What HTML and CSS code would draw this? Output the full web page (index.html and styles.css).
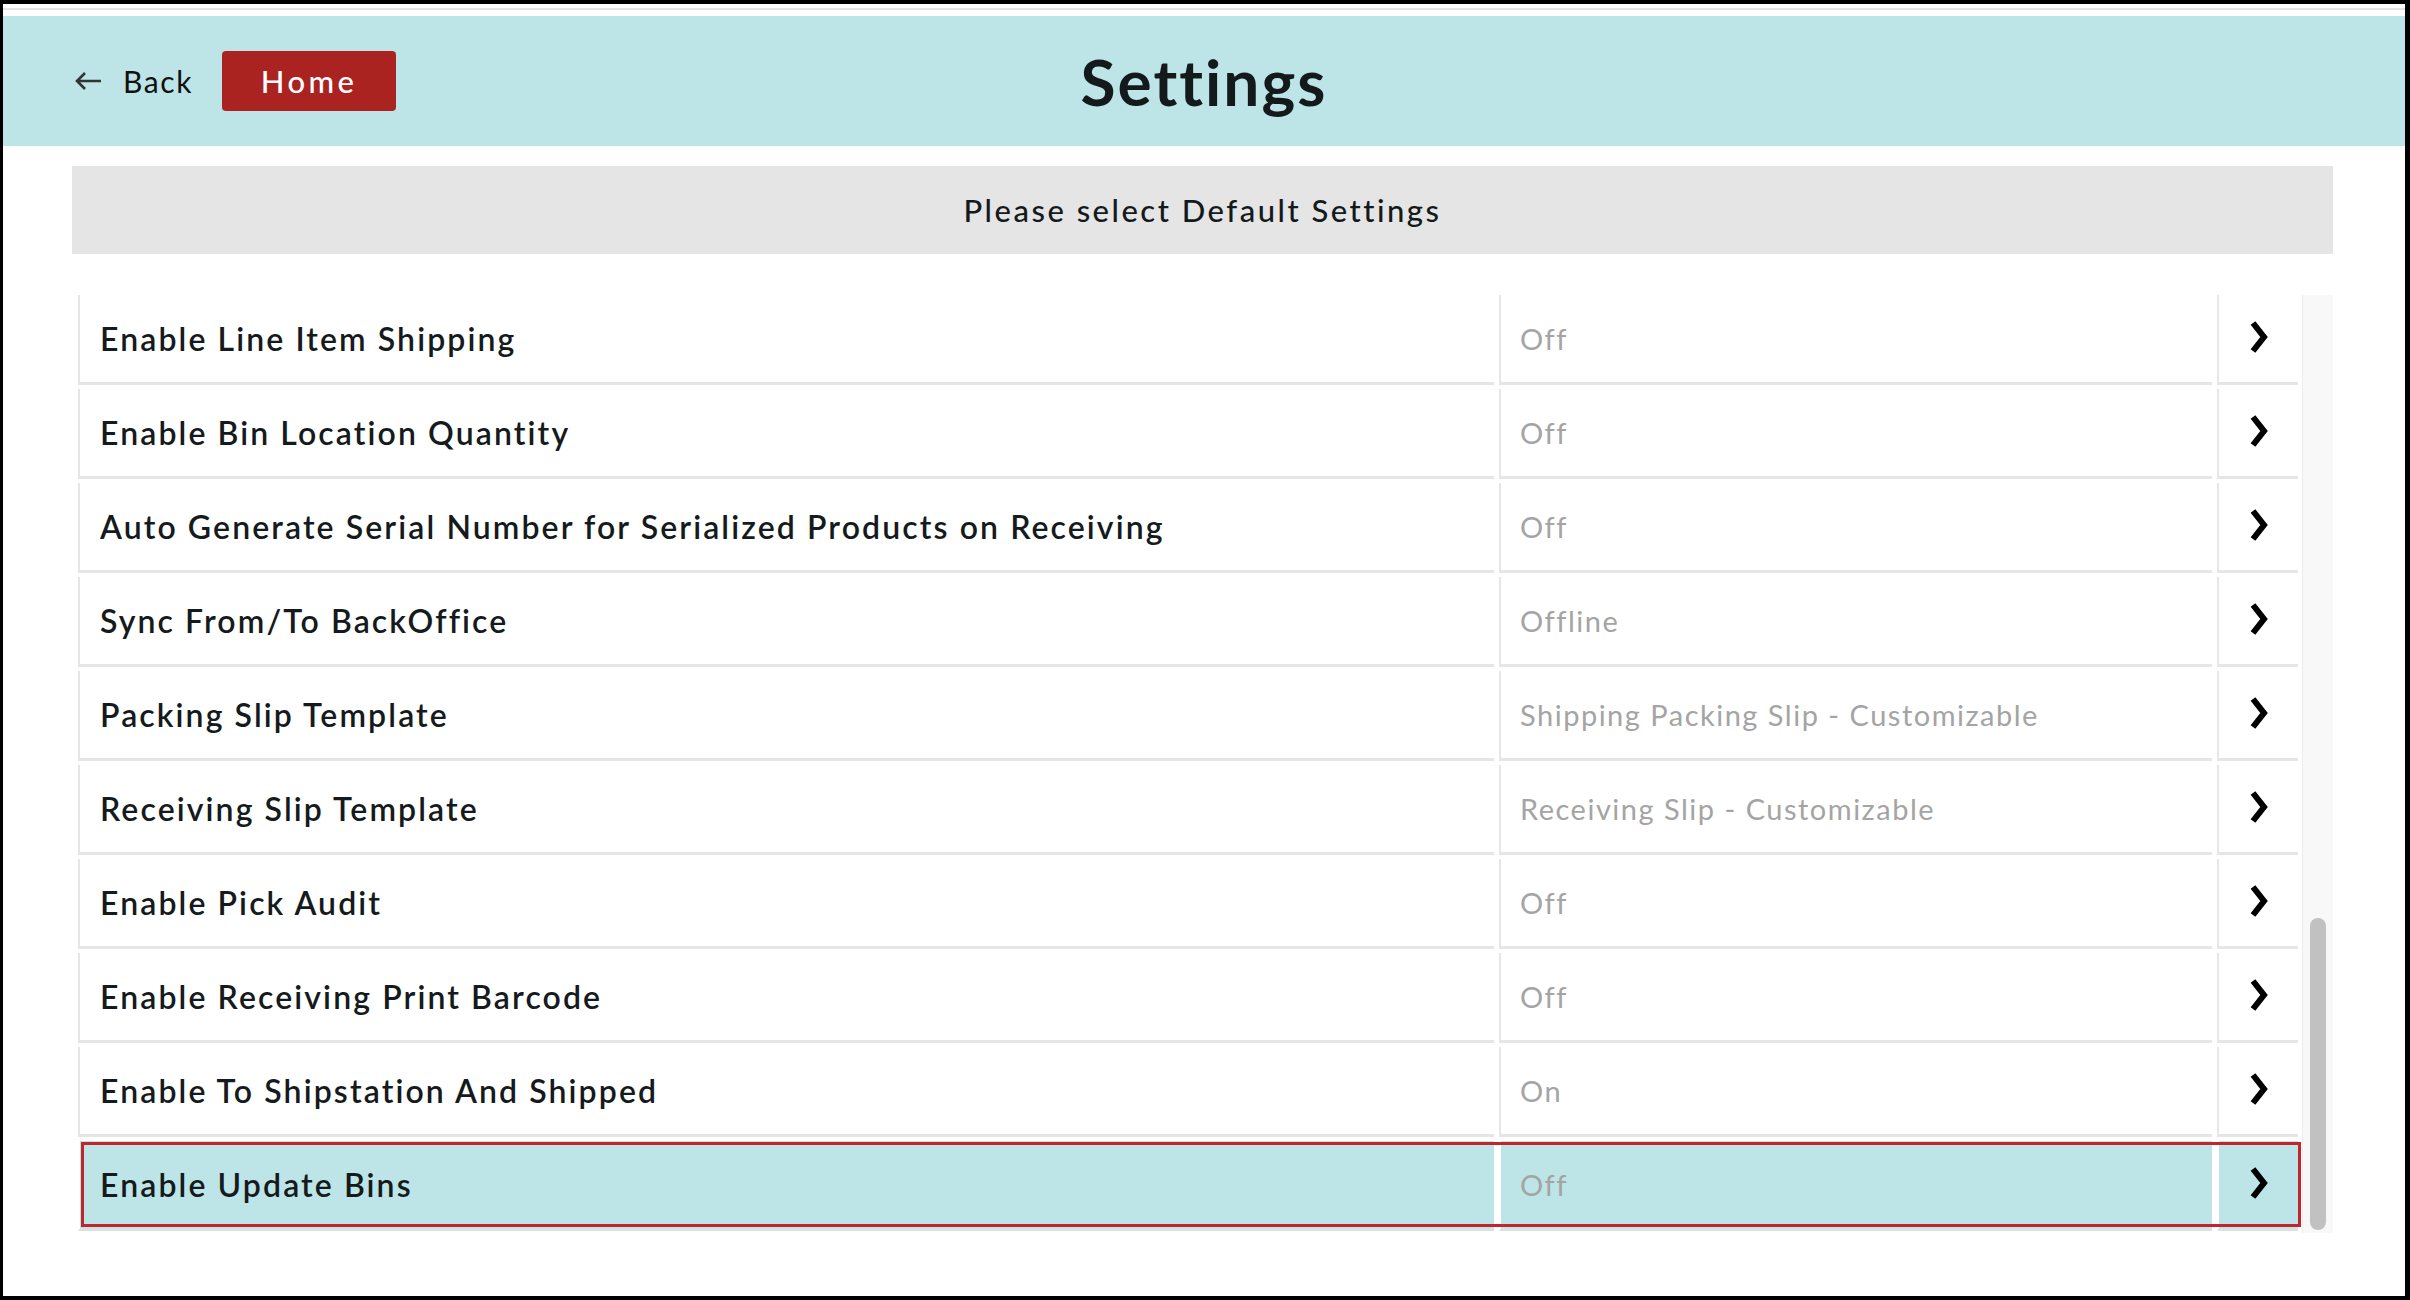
FILE: index.html
```html
<html>
<head>
	<title>Settings</title>
	<meta charset='UTF-8'>
	<link rel="stylesheet" href="styles.css">
</head>
<body>
	<div class='frame'>
		<div class='topline'></div>
		<div class='topbar'>
			<div class='nav'>
				<a class='back' href='#'>
					<svg width='28' height='20' viewBox='0 0 28 20'><path d='M27 10H3M11 2L3 10L11 18' fill='none' stroke='#333' stroke-width='2.6'/></svg>
					<span>Back</span>
				</a>
				<a class='home' href='#'>Home</a>
			</div>
			<h1 class='title'>Settings</h1>
			<div></div>
		</div>
		<div class='content'>
			<div class='notice'>Please select Default Settings</div>
			<div class='listwrap'>
				<div class='list'>
					<div class='row'>
						<div class='cell label'>Enable Line Item Shipping</div>
						<div class='cell value'>Off</div>
						<div class='cell go'><svg class='chev' width='20' height='34' viewBox='0 0 20 34'><polyline points='4,3 15,17 4,31' fill='none' stroke='#000' stroke-width='6'/></svg></div>
					</div>
					<div class='row'>
						<div class='cell label'>Enable Bin Location Quantity</div>
						<div class='cell value'>Off</div>
						<div class='cell go'><svg class='chev' width='20' height='34' viewBox='0 0 20 34'><polyline points='4,3 15,17 4,31' fill='none' stroke='#000' stroke-width='6'/></svg></div>
					</div>
					<div class='row'>
						<div class='cell label'>Auto Generate Serial Number for Serialized Products on Receiving</div>
						<div class='cell value'>Off</div>
						<div class='cell go'><svg class='chev' width='20' height='34' viewBox='0 0 20 34'><polyline points='4,3 15,17 4,31' fill='none' stroke='#000' stroke-width='6'/></svg></div>
					</div>
					<div class='row'>
						<div class='cell label'>Sync From/To BackOffice</div>
						<div class='cell value'>Offline</div>
						<div class='cell go'><svg class='chev' width='20' height='34' viewBox='0 0 20 34'><polyline points='4,3 15,17 4,31' fill='none' stroke='#000' stroke-width='6'/></svg></div>
					</div>
					<div class='row'>
						<div class='cell label'>Packing Slip Template</div>
						<div class='cell value'>Shipping Packing Slip - Customizable</div>
						<div class='cell go'><svg class='chev' width='20' height='34' viewBox='0 0 20 34'><polyline points='4,3 15,17 4,31' fill='none' stroke='#000' stroke-width='6'/></svg></div>
					</div>
					<div class='row'>
						<div class='cell label'>Receiving Slip Template</div>
						<div class='cell value'>Receiving Slip - Customizable</div>
						<div class='cell go'><svg class='chev' width='20' height='34' viewBox='0 0 20 34'><polyline points='4,3 15,17 4,31' fill='none' stroke='#000' stroke-width='6'/></svg></div>
					</div>
					<div class='row'>
						<div class='cell label'>Enable Pick Audit</div>
						<div class='cell value'>Off</div>
						<div class='cell go'><svg class='chev' width='20' height='34' viewBox='0 0 20 34'><polyline points='4,3 15,17 4,31' fill='none' stroke='#000' stroke-width='6'/></svg></div>
					</div>
					<div class='row'>
						<div class='cell label'>Enable Receiving Print Barcode</div>
						<div class='cell value'>Off</div>
						<div class='cell go'><svg class='chev' width='20' height='34' viewBox='0 0 20 34'><polyline points='4,3 15,17 4,31' fill='none' stroke='#000' stroke-width='6'/></svg></div>
					</div>
					<div class='row'>
						<div class='cell label'>Enable To Shipstation And Shipped</div>
						<div class='cell value'>On</div>
						<div class='cell go'><svg class='chev' width='20' height='34' viewBox='0 0 20 34'><polyline points='4,3 15,17 4,31' fill='none' stroke='#000' stroke-width='6'/></svg></div>
					</div>
					<div class='row selected'>
						<div class='cell label'>Enable Update Bins</div>
						<div class='cell value'>Off</div>
						<div class='cell go'><svg class='chev' width='20' height='34' viewBox='0 0 20 34'><polyline points='4,3 15,17 4,31' fill='none' stroke='#000' stroke-width='6'/></svg></div>
					</div>
				</div>
				<div class='track'><div class='thumb'></div></div>
			</div>
		</div>
	</div>
</body>
</html>
```

FILE: styles.css
```css
html, body {
	margin: 0;
	height: 100%;
}
body {
	background: #000;
	padding: 4px 5px 4px 3px;
	box-sizing: border-box;
	font-family: Lato, "Open Sans", sans-serif;
	color: #151a1c;
}
.frame {
	background: #fff;
	height: 100%;
	display: flex;
	flex-direction: column;
}
.topline {
	height: 2px;
	margin: 4px 0 6px 0;
	background: #e6e6e6;
}
.topbar {
	height: 130px;
	background: #bde4e6;
	display: grid;
	grid-template-columns: 1fr auto 1fr;
	align-items: center;
}
.nav {
	display: flex;
	align-items: center;
	padding-left: 71px;
}
.back {
	display: flex;
	align-items: center;
	gap: 21px;
	color: #111;
	text-decoration: none;
	font-size: 30px;
	letter-spacing: 1.6px;
}
.home {
	margin-left: 29px;
	width: 174px;
	height: 60px;
	background: #ab2321;
	border-radius: 4px;
	color: #fff;
	text-decoration: none;
	font-size: 31px;
	font-weight: 500;
	letter-spacing: 3.4px;
	display: flex;
	align-items: center;
	justify-content: center;
}
.title {
	margin: 0;
	font-size: 64px;
	font-weight: 700;
	letter-spacing: 2px;
	color: #141a1c;
}
.content {
	padding: 0 72px 0 69px;
}
.notice {
	margin-top: 20px;
	height: 88px;
	background: #e5e5e5;
	display: flex;
	align-items: center;
	justify-content: center;
	font-size: 31px;
	font-weight: 500;
	letter-spacing: 2.5px;
	color: #141a1c;
}
.listwrap {
	margin-top: 41px;
	height: 938px;
	display: flex;
	padding-left: 6px;
	gap: 4px;
}
.list {
	flex: 1;
	display: flex;
	flex-direction: column;
	gap: 4px;
}
.row {
	display: grid;
	grid-template-columns: 1fr 713px 81px;
	column-gap: 5px;
	height: 90px;
	position: relative;
}
.cell {
	border-left: 2px solid #e6e6e6;
	border-bottom: 3px solid #e6e6e6;
	display: flex;
	align-items: center;
}
.label {
	padding-left: 20px;
	font-size: 32px;
	font-weight: 600;
	letter-spacing: 2.1px;
	color: #151a1c;
}
.value {
	padding-left: 19px;
	font-size: 29px;
	font-weight: 400;
	letter-spacing: 1.5px;
	color: #a4a4a4;
}
.go {
	justify-content: center;
}
.chev {
	margin-top: -4px;
}
.row.selected .cell {
	background: #bde4e6;
	border-bottom-color: #d5e3e3;
	border-left-color: #fff;
}
.row.selected::after {
	content: '';
	position: absolute;
	top: 1px;
	left: 3px;
	right: -3px;
	bottom: 4px;
	border: 3px solid #c0262c;
	pointer-events: none;
}
.track {
	width: 31px;
	box-sizing: border-box;
	background: #f8f8f8;
	border-left: 1px solid #ececec;
	display: flex;
	flex-direction: column;
	justify-content: flex-end;
	padding: 0 7px 3px 7px;
}
.thumb {
	height: 312px;
	background: #c1c1c1;
	border-radius: 8px;
}
```
